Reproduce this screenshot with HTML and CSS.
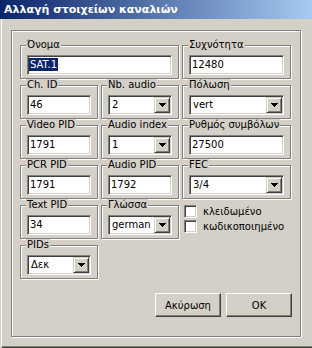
FILE: index.html
```html
<!DOCTYPE html>
<html lang="el">
<head>
    <meta charset="UTF-8" />
    <title>Αλλαγή στοιχείων καναλιών</title>
    <link rel="stylesheet" href="styles.css">
</head>
<body>
    <div class="window">
        <div class="titlebar">Αλλαγή στοιχείων καναλιών</div>
        <div class="client">
            <div class="panel">
                <div class="grid">
                    <div class="group span2">
                        <div class="caption">Όνομα</div>
                        <div class="edit"><span class="sel">SAT.1</span></div>
                    </div>
                    <div class="group">
                        <div class="caption">Συχνότητα</div>
                        <div class="edit">12480</div>
                    </div>

                    <div class="group">
                        <div class="caption">Ch. ID</div>
                        <div class="edit">46</div>
                    </div>
                    <div class="group">
                        <div class="caption">Nb. audio</div>
                        <div class="combo"><span class="value">2</span><span class="drop"><svg width="7" height="4" viewBox="0 0 7 4"><path d="M0 0h7v1H0zM1 1h5v1H1zM2 2h3v1H2zM3 3h1v1H3z"/></svg></span></div>
                    </div>
                    <div class="group">
                        <div class="caption">Πόλωση</div>
                        <div class="combo"><span class="value">vert</span><span class="drop"><svg width="7" height="4" viewBox="0 0 7 4"><path d="M0 0h7v1H0zM1 1h5v1H1zM2 2h3v1H2zM3 3h1v1H3z"/></svg></span></div>
                    </div>

                    <div class="group">
                        <div class="caption">Video PID</div>
                        <div class="edit">1791</div>
                    </div>
                    <div class="group">
                        <div class="caption">Audio index</div>
                        <div class="combo"><span class="value">1</span><span class="drop"><svg width="7" height="4" viewBox="0 0 7 4"><path d="M0 0h7v1H0zM1 1h5v1H1zM2 2h3v1H2zM3 3h1v1H3z"/></svg></span></div>
                    </div>
                    <div class="group">
                        <div class="caption">Ρυθμός συμβόλων</div>
                        <div class="edit">27500</div>
                    </div>

                    <div class="group">
                        <div class="caption">PCR PID</div>
                        <div class="edit">1791</div>
                    </div>
                    <div class="group">
                        <div class="caption">Audio PID</div>
                        <div class="edit">1792</div>
                    </div>
                    <div class="group">
                        <div class="caption">FEC</div>
                        <div class="combo"><span class="value">3/4</span><span class="drop"><svg width="7" height="4" viewBox="0 0 7 4"><path d="M0 0h7v1H0zM1 1h5v1H1zM2 2h3v1H2zM3 3h1v1H3z"/></svg></span></div>
                    </div>

                    <div class="group">
                        <div class="caption">Text PID</div>
                        <div class="edit">34</div>
                    </div>
                    <div class="group">
                        <div class="caption">Γλώσσα</div>
                        <div class="combo"><span class="value">german</span><span class="drop"><svg width="7" height="4" viewBox="0 0 7 4"><path d="M0 0h7v1H0zM1 1h5v1H1zM2 2h3v1H2zM3 3h1v1H3z"/></svg></span></div>
                    </div>
                    <div class="checks">
                        <label class="check"><span class="box"></span>κλειδωμένο</label>
                        <label class="check"><span class="box"></span>κωδικοποιημένο</label>
                    </div>

                    <div class="group">
                        <div class="caption">PIDs</div>
                        <div class="combo"><span class="value">Δεκ</span><span class="drop"><svg width="7" height="4" viewBox="0 0 7 4"><path d="M0 0h7v1H0zM1 1h5v1H1zM2 2h3v1H2zM3 3h1v1H3z"/></svg></span></div>
                    </div>
                </div>

                <div class="buttons">
                    <div class="button">Ακύρωση</div>
                    <div class="button">OK</div>
                </div>
            </div>
        </div>
    </div>
</body>
</html>
```

FILE: styles.css
```css
body {
    margin: 0;
    font-family: "DejaVu Sans", Verdana, sans-serif;
    font-size: 10px;
    color: #000;
}

.window {
    width: 312px;
    height: 348px;
    background: #d4d0c8;
    display: flex;
    flex-direction: column;
}

.titlebar {
    height: 19px;
    line-height: 19px;
    padding-left: 4px;
    color: #fff;
    font-size: 11px;
    font-weight: bold;
    background: linear-gradient(to right, #0a246a, #a6caf0);
}

.client {
    flex: 1;
    display: flex;
    margin-left: 1px;
    border-left: 1px solid #fff;
    border-bottom: 1px solid #404040;
    box-shadow: inset 0 -1px #808080;
    padding: 11px 11px 10px 9px;
}

.panel {
    flex: 1;
    border: 1px solid #808080;
    box-shadow: inset 1px 1px #fff, 1px 1px #fff;
    padding: 14px 8px 8px 8px;
}

.grid {
    display: grid;
    grid-template-columns: 78px 78px 109px;
    gap: 6px 3px;
}

.group {
    border: 1px solid #808080;
    box-shadow: inset 1px 1px #fff, 1px 1px #fff;
    padding: 0 6px 3px 6px;
}

.span2 {
    grid-column: span 2;
}

.caption {
    width: fit-content;
    margin: -7px 0 4px -1px;
    padding: 0 1px;
    line-height: 12px;
    white-space: nowrap;
    background: #d4d0c8;
}

.edit,
.combo {
    height: 20px;
    box-sizing: border-box;
    background: #fff;
    border: 1px solid;
    border-color: #808080 #fff #fff #808080;
    box-shadow: inset 1px 1px #404040, inset -1px -1px #d4d0c8;
}

.edit {
    padding: 0 2px;
    line-height: 18px;
}

.sel {
    display: inline-block;
    margin-left: -1px;
    padding: 0 1px;
    line-height: 13px;
    color: #fff;
    background: #0a246a;
}

.combo {
    display: flex;
    padding: 1px;
}

.combo .value {
    flex: 1;
    padding-left: 2px;
    line-height: 16px;
}

.drop {
    width: 16px;
    box-sizing: border-box;
    border: 1px solid;
    border-color: #d4d0c8 #404040 #404040 #d4d0c8;
    box-shadow: inset 1px 1px #fff, inset -1px -1px #808080;
    background: #d4d0c8;
    display: flex;
    align-items: center;
    justify-content: center;
}

.checks {
    display: flex;
    flex-direction: column;
    gap: 2px;
    padding-left: 2px;
}

.check {
    display: flex;
    align-items: center;
    gap: 6px;
    line-height: 13px;
    white-space: nowrap;
}

.box {
    width: 13px;
    height: 13px;
    box-sizing: border-box;
    background: #fff;
    border: 1px solid;
    border-color: #808080 #fff #fff #808080;
    box-shadow: inset 1px 1px #404040, inset -1px -1px #d4d0c8;
}

.buttons {
    display: flex;
    justify-content: flex-end;
    gap: 5px;
    margin-top: 14px;
}

.button {
    width: 66px;
    height: 24px;
    box-sizing: border-box;
    border: 1px solid;
    border-color: #fff #404040 #404040 #fff;
    box-shadow: inset -1px -1px #808080;
    display: flex;
    align-items: center;
    justify-content: center;
}
```
